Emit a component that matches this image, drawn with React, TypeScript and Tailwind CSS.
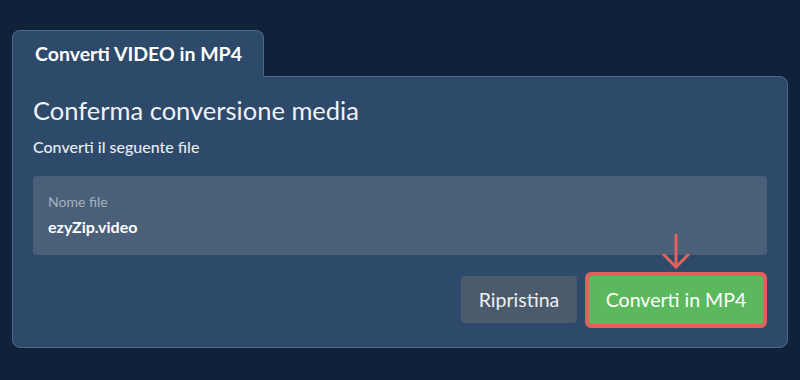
import React from 'react';

const App: React.FC = () => {
  return (
    <div
      className="min-h-screen w-full bg-[#10223a] px-3 pt-[30px]"
      style={{ fontFamily: 'Lato, "Open Sans", sans-serif' }}
    >
      <div className="relative z-10 -mb-px inline-flex h-[47px] items-center rounded-t-lg border border-b-0 border-[#4d6787] bg-[#2e4a6a] pl-[22px] pr-[21px]">
        <span className="text-[19.5px] font-bold text-white">Converti VIDEO in MP4</span>
      </div>

      <div className="rounded-b-lg rounded-tr-lg border border-[#4d6787] bg-[#2e4a6a] px-5 pb-[19px] pt-[18px]">
        <h1 className="text-[25.5px] leading-[1.2] text-[#eef2f6]">Conferma conversione media</h1>
        <p className="mt-[11px] text-[16px] font-medium leading-[20px] text-[#e6ecf2]">Converti il seguente file</p>

        <div className="mt-[19px] rounded bg-[#4a5f78] px-[15px] pb-[18px] pt-[18px]">
          <p className="text-[14px] leading-[16px] text-[#a3b1c0]">Nome file</p>
          <p className="mt-[7px] text-[16px] font-bold leading-[20px] text-white">ezyZip.video</p>
        </div>

        <div className="mt-[17px] flex items-center justify-end gap-2">
          <button className="h-[47px] w-[116px] rounded bg-[#4c5b6c] text-[19.5px] text-[#eaeff4]">
            Ripristina
          </button>
          <div className="relative">
            <svg
              className="absolute -top-[39px] left-1/2 -translate-x-1/2"
              width="30"
              height="37"
              viewBox="0 0 30 37"
              fill="none"
              stroke="#e0625b"
              strokeWidth="3"
              strokeLinecap="round"
              strokeLinejoin="round"
            >
              <path d="M15 2 L15 34" />
              <path d="M3 22 L15 34 L27 22" />
            </svg>
            <button className="h-[56px] w-[182px] rounded-md border-4 border-[#e0625b] bg-[#5cb85c] text-[19.5px] text-white">
              Converti in MP4
            </button>
          </div>
        </div>
      </div>
    </div>
  );
};

export default App;
